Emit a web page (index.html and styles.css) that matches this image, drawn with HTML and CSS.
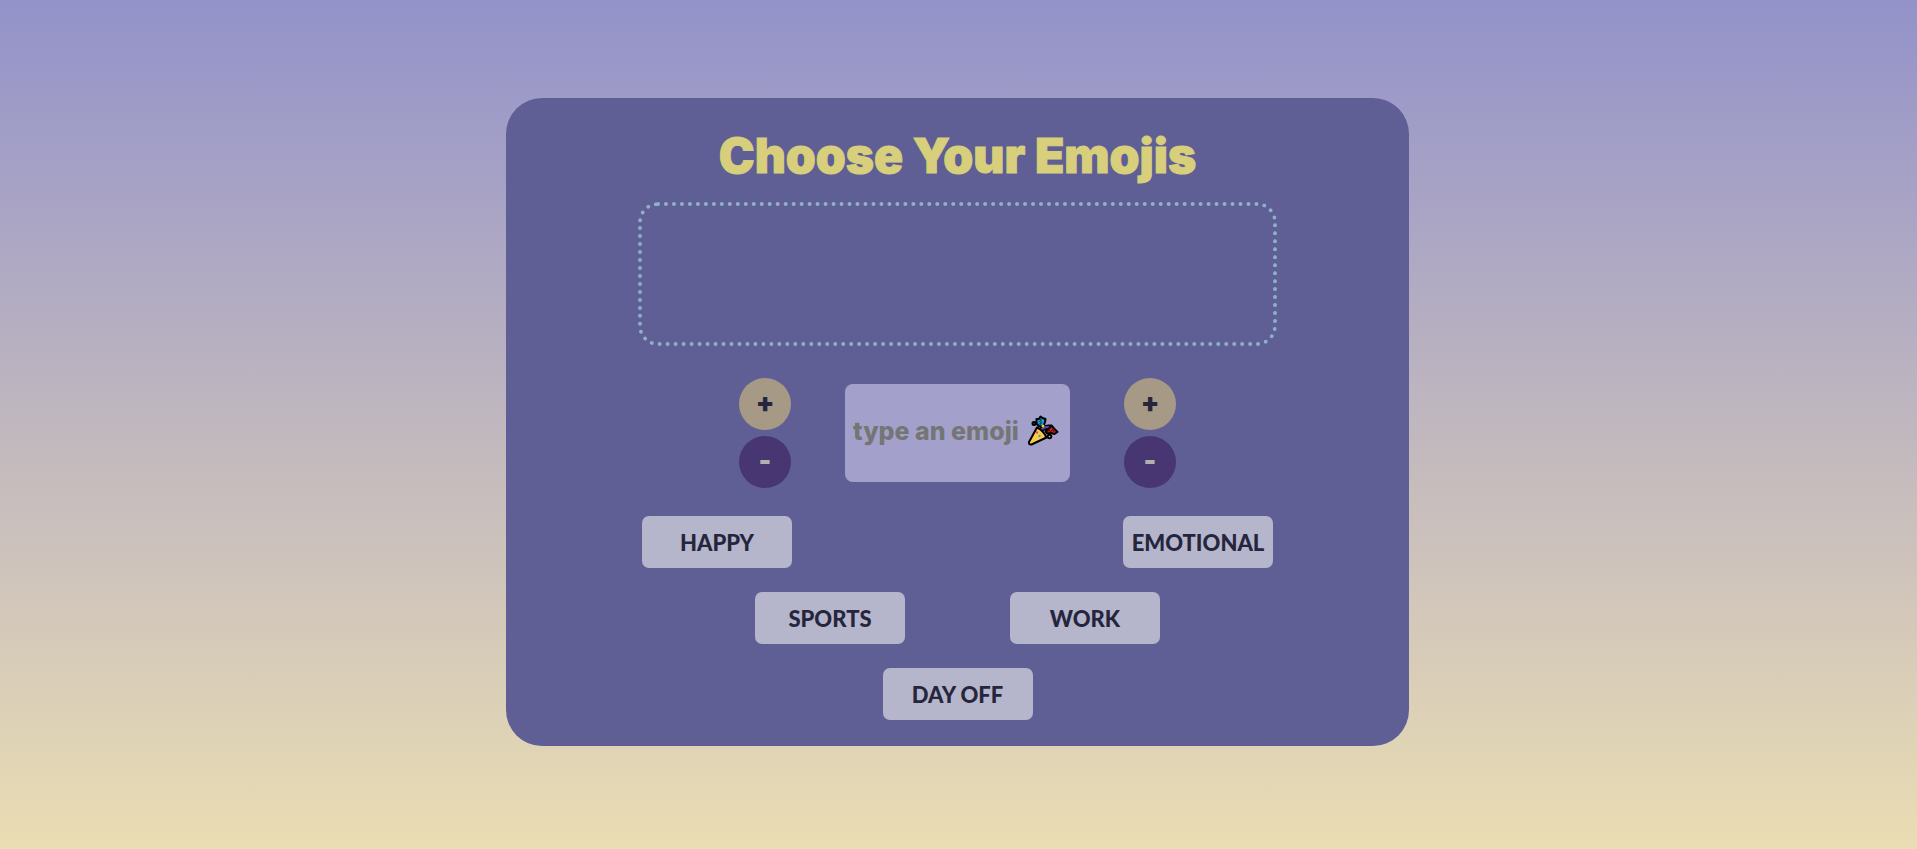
FILE: index.html
```
<!DOCTYPE html>
<html lang="en">
<head>
<meta charset="utf-8">
<meta name="viewport" content="width=device-width, initial-scale=1">
<title>Choose Your Emojis</title>
<link rel="stylesheet" href="styles.css">
</head>
<body>
<main class="card">
  <h1 class="title">Choose Your Emojis</h1>
  <section class="board" aria-label="Chosen emojis"></section>
  <div class="controls">
    <div class="stepper">
      <button class="round add" type="button" aria-label="Add to start">+</button>
      <button class="round remove" type="button" aria-label="Remove from start">-</button>
    </div>
    <label class="field">
      <input class="entry" type="text" placeholder="type an emoji" aria-label="Type an emoji">
      <svg class="popper" viewBox="0 0 32 32" aria-hidden="true">
        <g stroke="#000" stroke-width="2" stroke-linejoin="round" stroke-linecap="round">
          <path d="M15 14 Q18 11.500 23 12" fill="none" stroke-width="5"/>
          <path d="M15 14 Q18 11.500 23 12" fill="none" stroke="#5b4bb0" stroke-width="2"/>
          <path d="M10 12.500 Q16 15 19.500 22.500 L4.500 29.500 Q1.500 30 2 27 Z" fill="#fcca4e"/>
          <circle cx="7" cy="8.500" r="1.500" fill="#5b4bb0"/>
          <path d="M9.500 4 L12 4 L13.500 1.500 L15.500 3 L18.500 4 L18 7 L16.500 11 L12 11.500 L9.500 8.500 Z" fill="#199fd8"/>
          <path d="M24.500 10.500 L27 13.500 L30.500 17 L27.500 19 L24 18 L20 18.500 L18.500 16.500 L21.500 14 Z" fill="#d0281c"/>
          <circle cx="22.500" cy="21.500" r="1.800" fill="#f6d22e"/>
        </g>
        <path d="M12.500 4 L14.500 5 L12.500 6.500 L15 7.500 L12.500 9 L14.500 10.500" fill="none" stroke="#063c50"/>
        <path d="M20.500 17 L22 14.500 L23.500 17 L25.500 14.500 L27 17" fill="none" stroke="#500"/>
        <circle cx="16" cy="11" r="1.500" fill="#f6d22e"/>
        <circle cx="10" cy="17.500" r="1.200" fill="#ea4b3c"/>
        <circle cx="12.500" cy="21" r="1.200" fill="#2fb5a6"/>
      </svg>
    </label>
    <div class="stepper">
      <button class="round add" type="button" aria-label="Add to end">+</button>
      <button class="round remove" type="button" aria-label="Remove from end">-</button>
    </div>
  </div>
  <nav class="categories" aria-label="Emoji categories">
    <div class="row row-wide">
      <button class="category" type="button">HAPPY</button>
      <button class="category" type="button">EMOTIONAL</button>
    </div>
    <div class="row row-mid">
      <button class="category" type="button">SPORTS</button>
      <button class="category" type="button">WORK</button>
    </div>
    <div class="row">
      <button class="category" type="button">DAY OFF</button>
    </div>
  </nav>
</main>
</body>
</html>
```
FILE: styles.css
```
* {
  box-sizing: border-box;
}

body {
  margin: 0;
  min-height: 100vh;
  display: flex;
  justify-content: center;
  align-items: flex-start;
  padding: 98px 18px 98px 16px;
  background: linear-gradient(#9392ca, #c7bdbd 58%, #eaddb3);
  font-family: Lato, "Open Sans", sans-serif;
  font-weight: 900;
}

button,
input {
  font: inherit;
}

.card {
  width: 100%;
  max-width: 903px;
  display: flex;
  flex-direction: column;
  align-items: center;
  padding: 26px 24px;
  border-radius: 36px;
  background: #605f95;
}

.title {
  margin: 0 0 14px;
  color: #d7cf7b;
  font-family: Inter, Lato, sans-serif;
  font-size: 48px;
  line-height: 64px;
  font-weight: 900;
  -webkit-text-stroke: 1px #d7cf7b;
}

.board {
  width: 100%;
  max-width: 639px;
  height: 144px;
  border: 4px dotted #8cb1c9;
  border-radius: 20px;
}

.controls {
  display: flex;
  justify-content: center;
  align-items: center;
  gap: 54px;
  margin-top: 32px;
}

.stepper {
  display: flex;
  flex-direction: column;
  gap: 6px;
}

.round {
  width: 52px;
  height: 52px;
  padding: 0 0 2px;
  border: 0;
  border-radius: 50%;
  font-family: Inter, Lato, sans-serif;
  font-size: 27px;
  line-height: 48px;
}

.add {
  background: #a69985;
  color: #25263d;
}

.remove {
  background: #483673;
  color: #b5b0b0;
}

.field {
  display: flex;
  align-items: center;
  width: 225px;
  height: 98px;
  padding: 0 10px 4px 8px;
  border-radius: 8px;
  background: #a3a1cb;
}

.entry {
  flex: 1;
  min-width: 0;
  padding: 0;
  border: 0;
  outline: 0;
  background: none;
  color: #25263d;
  font-family: Inter, Lato, sans-serif;
  font-size: 25px;
  font-weight: 800;
}

.entry::placeholder {
  color: #757575;
  opacity: 1;
}

.popper {
  flex: none;
  width: 34px;
  height: 32px;
}

.categories {
  width: 100%;
  max-width: 631px;
  display: flex;
  flex-direction: column;
  gap: 24px;
  margin-top: 28px;
}

.row {
  display: flex;
  justify-content: center;
}

.row-wide {
  justify-content: space-between;
}

.row-mid {
  gap: 105px;
}

.category {
  width: 150px;
  height: 52px;
  padding: 0;
  border: 0;
  border-radius: 7px;
  background: #b5b5cb;
  color: #25263d;
  font-size: 22px;
}
```
